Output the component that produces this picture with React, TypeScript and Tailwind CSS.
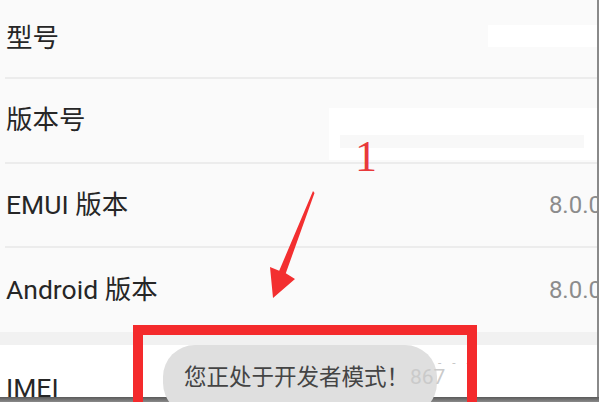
import React from "react";

const font = { fontFamily: 'Roboto, "Noto Sans CJK SC", sans-serif' };

function Divider() {
  return (
    <div className="pl-[5px] shrink-0">
      <div className="h-[2px] bg-[#ececec]" />
    </div>
  );
}

export default function App() {
  return (
    <div
      className="relative w-[599px] h-[402px] overflow-hidden bg-[#fafafa] flex flex-col"
      style={font}
    >
      <div className="flex flex-1 min-h-0 overflow-hidden">
        <div className="flex-1 min-w-0 flex flex-col overflow-hidden">
          {/* Row 1 */}
          <div className="relative shrink-0 h-[77px] flex items-center pl-[6px] text-[26.5px] text-[#262626] leading-none">
            <span>型号</span>
            <div className="absolute left-[488px] top-[25px] w-[110px] h-[22px] bg-white" />
          </div>
          <Divider />
          {/* Row 2 */}
          <div className="relative shrink-0 h-[83px] flex items-center pl-[6px] text-[26.5px] text-[#262626] leading-none">
            <span>版本号</span>
            <div className="absolute left-[329px] top-[29px] w-[270px] h-[52px] bg-white">
              <div className="ml-[11px] mt-[27px] w-[244px] h-[13px] bg-[#f8f8f8]" />
            </div>
          </div>
          <Divider />
          {/* Row 3 */}
          <div className="shrink-0 h-[82px] flex items-center justify-between pl-[6px] text-[26.5px] text-[#262626] leading-none">
            <span>EMUI 版本</span>
            <span className="text-[24px] text-[#8c8c8c] mr-[-5px]">8.0.0</span>
          </div>
          <Divider />
          {/* Row 4 */}
          <div className="shrink-0 h-[84px] flex items-center justify-between pl-[6px] text-[26.5px] text-[#262626] leading-none">
            <span>Android 版本</span>
            <span className="text-[24px] text-[#8c8c8c] mr-[-5px]">8.0.0</span>
          </div>
          <div className="shrink-0 h-[13px] bg-[#f1f1f1]" />
          {/* IMEI row */}
          <div className="flex-1 min-h-0 overflow-hidden bg-white pl-[6px] pt-[30px] text-[26.5px] text-[#262626] leading-none">
            <span>IMEI</span>
          </div>
        </div>
        <div className="w-[2px] shrink-0 bg-[#8a8a8a]" />
      </div>
      <div className="shrink-0 h-[5px] bg-gradient-to-b from-[#5a5a5a] to-[#8a8a8a]" />

      {/* Toast */}
      <div className="absolute left-[163px] top-[345px] w-[274px] h-[70px] rounded-[32px] bg-[#dfdfdf] flex items-start pt-[21px] pl-[21px]">
        <span className="text-[22.5px] leading-none text-[#444444]">您正处于开发者模式！</span>
        <span className="absolute left-[247px] top-[22px] text-[21px] leading-none text-[#cacaca]">867</span>
      </div>
      <div className="absolute left-[438px] top-[357px] text-[12px] leading-none text-[#c8c8c8] tracking-[4px]">
        - - -
      </div>

      {/* Red box annotation */}
      <div className="absolute left-[133px] top-[325px] w-[344px] h-[120px] border-[10px] border-[#f42a2c]" />

      {/* Number annotation */}
      <div
        className="absolute left-[355px] top-[135px] text-[44px] leading-none text-[#e8393b]"
        style={{ fontFamily: '"Liberation Serif", serif' }}
      >
        1
      </div>

      {/* Arrow annotation */}
      <svg className="absolute left-0 top-0" width="599" height="402" viewBox="0 0 599 402">
        <polygon
          points="313,191 314.5,193 285.8,273.3 295,279 273,298 270,267 279.2,270.7"
          fill="#f32f30"
        />
      </svg>
    </div>
  );
}
